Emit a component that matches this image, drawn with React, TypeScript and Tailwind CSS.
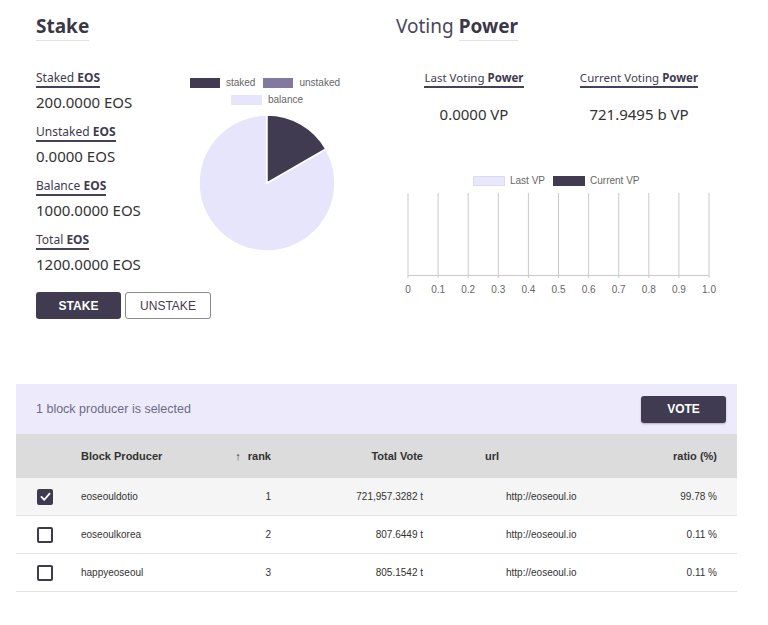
import React from "react";

const STATS = [
  { light: "Staked", bold: "EOS", value: "200.0000 EOS" },
  { light: "Unstaked", bold: "EOS", value: "0.0000 EOS" },
  { light: "Balance", bold: "EOS", value: "1000.0000 EOS" },
  { light: "Total", bold: "EOS", value: "1200.0000 EOS" },
];

const PRODUCERS = [
  { name: "eoseouldotio", rank: 1, total: "721,957.3282 t", url: "http://eoseoul.io", ratio: "99.78 %", checked: true },
  { name: "eoseoulkorea", rank: 2, total: "807.6449 t", url: "http://eoseoul.io", ratio: "0.11 %", checked: false },
  { name: "happyeoseoul", rank: 3, total: "805.1542 t", url: "http://eoseoul.io", ratio: "0.11 %", checked: false },
];

const TICKS = ["0", "0.1", "0.2", "0.3", "0.4", "0.5", "0.6", "0.7", "0.8", "0.9", "1.0"];

function Label({ light, bold }: { light: string; bold: string }) {
  return (
    <span className="inline-block self-start border-b-2 border-[#45415a] pb-px text-[12px] leading-[15px] text-[#3f3b4f]">
      {light} <b className="font-bold">{bold}</b>
    </span>
  );
}

function StakePie() {
  return (
    <div className="flex w-[150px] flex-col items-center pt-[7px] font-['Liberation_Sans',sans-serif] text-[10px] leading-[12px] text-[#666]">
      <div className="-ml-[4px] flex items-center gap-[8px]">
        <span className="flex items-center gap-[6px]">
          <span className="h-[10px] w-[30px] bg-[#403b51]" />
          staked
        </span>
        <span className="flex items-center gap-[6px]">
          <span className="h-[10px] w-[30px] bg-[#827a9e]" />
          unstaked
        </span>
      </div>
      <div className="mt-[5px] flex items-center gap-[6px]">
        <span className="h-[10px] w-[31px] bg-[#e7e5fb]" />
        balance
      </div>
      <svg width="140" height="140" viewBox="0 0 140 140" className="mt-[7px]">
        <path d="M70 70 L128.89 36 A68 68 0 1 1 70 2 Z" fill="#e7e5fb" stroke="#fff" strokeWidth="1.5" />
        <path d="M70 70 L70 2 A68 68 0 0 1 128.89 36 Z" fill="#403b51" stroke="#fff" strokeWidth="1.5" />
      </svg>
    </div>
  );
}

function VpChart() {
  const left = 12;
  const step = 30.1;
  return (
    <svg width="330" height="112" viewBox="0 0 330 112" className="mt-[2px] font-['Liberation_Sans',sans-serif]">
      {TICKS.map((t, i) => {
        const x = left + i * step;
        return (
          <g key={t}>
            <line x1={x} y1={5} x2={x} y2={90} stroke="#c9c9c9" strokeWidth="1" />
            <text x={x} y={105} textAnchor="middle" fontSize="10" fill="#666">
              {t}
            </text>
          </g>
        );
      })}
      <line x1={left} y1={87.5} x2={left + 10 * step} y2={87.5} stroke="#c9c9c9" strokeWidth="1" />
    </svg>
  );
}

function Checkbox({ checked }: { checked: boolean }) {
  if (checked) {
    return (
      <span className="flex h-[16px] w-[16px] items-center justify-center rounded-[2px] bg-[#3f3b4f]">
        <svg viewBox="0 0 16 16" className="h-[13px] w-[13px]" fill="none" stroke="#fff" strokeWidth={2.2} strokeLinecap="round" strokeLinejoin="round">
          <polyline points="3 8.5 6.5 12 13 4.5" />
        </svg>
      </span>
    );
  }
  return <span className="block h-[16px] w-[16px] rounded-[2px] border-2 border-[#3f3b4f]" />;
}

export default function App() {
  return (
    <div className="min-h-[625px] bg-white font-['Noto_Sans','Noto_Sans_CJK_KR',sans-serif] text-[#3f3b4f]">
      <div className="ml-[16px] w-[721px]">
        <div className="flex pl-[20px] pt-[12px]">
          {/* Stake */}
          <section className="w-[360px]">
            <h2 className="inline-block border-b border-[#e2e2e2] text-[19px] font-bold leading-[28px] text-[#3a3747]">
              Stake
            </h2>
            <div className="mt-[29px] flex">
              <div className="w-[156px] shrink-0">
                <div className="flex flex-col gap-[12px]">
                  {STATS.map((s) => (
                    <div key={s.light} className="flex flex-col">
                      <Label light={s.light} bold={s.bold} />
                      <div className="mt-[4px] text-[15px] leading-[20px] text-[#333]">{s.value}</div>
                    </div>
                  ))}
                </div>
                <div className="mt-[18px] flex w-[175px] gap-[4px] font-['Liberation_Sans',sans-serif] text-[12px]">
                  <button className="h-[27px] w-[85px] shrink-0 rounded-[3px] bg-[#403b51] font-bold text-white">STAKE</button>
                  <button className="h-[27px] w-[86px] shrink-0 rounded-[3px] border border-[#8a8a8a] bg-white text-[#3f3b4f]">
                    UNSTAKE
                  </button>
                </div>
              </div>
              <StakePie />
            </div>
          </section>

          {/* Voting Power */}
          <section className="flex-1">
            <h2 className="text-[19px] leading-[28px] text-[#4a4658]">
              Voting{" "}
              <span className="inline-block border-b border-[#e2e2e2] font-bold text-[#3a3747]">Power</span>
            </h2>
            <div className="mt-[29px] grid grid-cols-[156px_174px]">
              {[
                { light: "Last Voting", value: "0.0000 VP" },
                { light: "Current Voting", value: "721.9495 b VP" },
              ].map((v) => (
                <div key={v.light} className="flex flex-col items-center">
                  <span className="inline-block border-b-2 border-[#45415a] pb-px text-[11.5px] leading-[15px]">
                    {v.light} <b className="font-bold">Power</b>
                  </span>
                  <div className="mt-[16px] text-[15px] leading-[20px] text-[#333]">{v.value}</div>
                </div>
              ))}
            </div>
            <div className="ml-[77px] mt-[51px] flex h-[11px] items-center gap-[5px] font-['Liberation_Sans',sans-serif] text-[10px] text-[#666]">
              <span className="h-[10px] w-[32px] border border-[#dcdaf0] bg-[#e9e7fc]" />
              <span>Last VP</span>
              <span className="ml-[3px] h-[10px] w-[32px] bg-[#403b51]" />
              <span>Current VP</span>
            </div>
            <VpChart />
          </section>
        </div>

        {/* Producers */}
        <div className="mt-[65px] font-['Liberation_Sans',sans-serif]">
          <div className="flex h-[50px] items-center justify-between bg-[#edebfb] pl-[20px] pr-[11px]">
            <span className="text-[12.5px] text-[#6f6a84]">1 block producer is selected</span>
            <button className="h-[27px] w-[85px] rounded-[3px] bg-[#403b51] text-[12px] font-bold text-white shadow-[0_1px_2px_rgba(0,0,0,0.25)]">
              VOTE
            </button>
          </div>
          <div className="grid h-[44px] grid-cols-[49px_136px_86px_152px_161px_137px] items-center bg-[#dcdcdc] text-[11px] font-bold text-[#333]">
            <span />
            <span className="pl-[16px]">Block Producer</span>
            <span className="pr-[16px] text-right">
              <span className="mr-[7px] font-normal">↑</span>rank
            </span>
            <span className="pr-[16px] text-right">Total Vote</span>
            <span className="pl-[46px]">url</span>
            <span className="pr-[20px] text-right">ratio (%)</span>
          </div>
          {PRODUCERS.map((p) => (
            <div
              key={p.name}
              className={`grid h-[38px] grid-cols-[49px_136px_86px_152px_161px_137px] items-center border-b border-[#e3e3e3] text-[10px] text-[#333] ${
                p.checked ? "bg-[#f5f5f5]" : "bg-white"
              }`}
            >
              <span className="pl-[21px]">
                <Checkbox checked={p.checked} />
              </span>
              <span className="pl-[16px]">{p.name}</span>
              <span className="pr-[16px] text-right">{p.rank}</span>
              <span className="pr-[16px] text-right">{p.total}</span>
              <span className="pl-[67px]">{p.url}</span>
              <span className="pr-[20px] text-right">{p.ratio}</span>
            </div>
          ))}
        </div>
      </div>
    </div>
  );
}
